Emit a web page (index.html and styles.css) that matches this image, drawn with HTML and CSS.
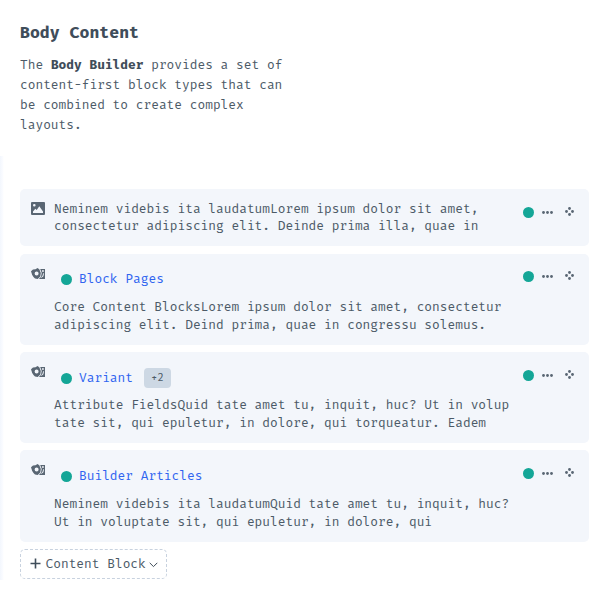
FILE: index.html
```html
<!DOCTYPE html>
<html lang="en">
<head>
<meta charset="utf-8">
<title>Body Content</title>
<link rel="stylesheet" href="styles.css">
</head>
<body>
<svg class="sprite" aria-hidden="true">
  <symbol id="image" viewBox="0 0 14 13">
    <path fill-rule="evenodd" d="M1 0h12Q14 0 14 1v11q0 1-1 1H1Q0 13 0 12V1Q0 0 1 0zM3.3 2a1.3 1.3 0 1 0 0 2.600a1.300 1.300 0 1 0 0-2.600zM2 11h10V9.500L8.300 4.300 5.700 8 4.300 6.700 2 9.500z"/>
  </symbol>
  <symbol id="entry" viewBox="0 0 14 12">
    <path fill-rule="evenodd" d="M0 3.200 2 1.600 4.500 1.300 6.500 0 8.300 1.300 9.800 5 9.300 8.500 6.700 11 4 10.600 2.500 9 1.200 7zM5.600 3.400a2 2 0 1 0 0 4a2 2 0 1 0 0-4z"/>
    <path fill-rule="evenodd" d="M9.200 1H14v10H7.800L9.900 9 10.700 5zM11 2.300v1.500h1.800v-1.500zM12.200 5.200 11.500 7.800l-1.500 1.700 .6.300 1.800-1.600.6-3z"/>
  </symbol>
  <symbol id="dots" viewBox="0 0 11 3">
    <circle cx="1.500" cy="1.500" r="1.400"/><circle cx="5.500" cy="1.500" r="1.400"/><circle cx="9.500" cy="1.500" r="1.400"/>
  </symbol>
  <symbol id="move" viewBox="0 0 9 9">
    <circle cx="4.500" cy="1.500" r="1.400"/><circle cx="1.500" cy="4.500" r="1.400"/><circle cx="7.500" cy="4.500" r="1.400"/><circle cx="4.500" cy="7.500" r="1.400"/>
  </symbol>
</svg>

<main class="field">
  <h1>Body Content</h1>
  <p class="intro">The <b>Body Builder</b> provides a set of<br>content-first block types that can<br>be combined to create complex<br>layouts.</p>

  <div class="blocks">
    <article class="card compact">
      <svg class="type image"><use href="#image"/></svg>
      <p class="preview">Neminem videbis ita laudatumLorem ipsum dolor sit amet,<br>consectetur adipiscing elit. Deinde prima illa, quae in</p>
      <div class="actions"><i class="status"></i><svg class="dots"><use href="#dots"/></svg><svg class="move"><use href="#move"/></svg></div>
    </article>

    <article class="card">
      <svg class="type"><use href="#entry"/></svg>
      <div class="content">
        <div class="entry"><i class="status"></i><a>Block Pages</a></div>
        <p class="preview">Core Content BlocksLorem ipsum dolor sit amet, consectetur<br>adipiscing elit. Deind prima, quae in congressu solemus.</p>
      </div>
      <div class="actions"><i class="status"></i><svg class="dots"><use href="#dots"/></svg><svg class="move"><use href="#move"/></svg></div>
    </article>

    <article class="card">
      <svg class="type"><use href="#entry"/></svg>
      <div class="content">
        <div class="entry"><i class="status"></i><a>Variant</a><span class="badge">+2</span></div>
        <p class="preview">Attribute FieldsQuid tate amet tu, inquit, huc? Ut in volup<br>tate sit, qui epuletur, in dolore, qui torqueatur. Eadem</p>
      </div>
      <div class="actions"><i class="status"></i><svg class="dots"><use href="#dots"/></svg><svg class="move"><use href="#move"/></svg></div>
    </article>

    <article class="card">
      <svg class="type"><use href="#entry"/></svg>
      <div class="content">
        <div class="entry"><i class="status"></i><a>Builder Articles</a></div>
        <p class="preview">Neminem videbis ita laudatumQuid tate amet tu, inquit, huc?<br>Ut in voluptate sit, qui epuletur, in dolore, qui</p>
      </div>
      <div class="actions"><i class="status"></i><svg class="dots"><use href="#dots"/></svg><svg class="move"><use href="#move"/></svg></div>
    </article>
    <button class="add" type="button">
      <svg class="plus" viewBox="0 0 11 11"><path d="M5.500 .5v10M.5 5.500h10"/></svg>
      <span>Content Block</span>
      <svg class="chevron" viewBox="0 0 9 6"><path d="M.7.8 4.500 4.600 8.300.8"/></svg>
    </button>
  </div>
</main>
</body>
</html>
```

FILE: styles.css
```css
* { box-sizing: border-box; }
body {
  margin: 0;
  background: #fff;
  color: #4c5a67;
  font: 12.870px/20px "Fira Mono", "Fira Code", "DejaVu Sans Mono", monospace;
}
svg { display: block; flex: none; fill: #596673; }
.sprite { position: absolute; width: 0; height: 0; }
.field { height: 597px; padding-top: 20px; }
h1 {
  margin: 0 20px;
  color: #3f4d5a;
  font-size: 16.550px;
  line-height: 25px;
}
p { margin: 0; white-space: nowrap; }
.intro { margin: 10px 20px 0; }
.intro b { color: #3f4d5a; }
.blocks {
  height: 424px;
  margin-top: 21px;
  padding: 33px 18px 0 20px;
  background: linear-gradient(to right, #f3f7fd 0, #f8faff 2px, #fff 4px) no-repeat;
}
.card {
  display: flex;
  align-items: flex-start;
  height: 91.300px;
  margin-bottom: 7px;
  padding-left: 11px;
  border-radius: 5px;
  background: #f3f6fb;
}
.card.compact { height: 57px; margin-bottom: 7.700px; }
.type { width: 14px; height: 12px; margin: 14.200px 9px 0 0; }
.type.image { height: 13px; margin-top: 13px; }
.preview { line-height: 18px; }
.compact .preview { margin-top: 11px; line-height: 17px; }
.entry { display: flex; align-items: center; height: 20px; margin: 15.700px 0 8.600px 7px; }
.status { flex: none; width: 11px; height: 11px; border-radius: 50%; background: #14a697; }
.entry .status { margin: 1px 7px 0 0; }
.entry a { color: #2f64f0; }
.badge {
  margin-left: 11px;
  padding: 0 7px;
  border-radius: 4px;
  background: #cdd8e4;
  font-size: 10.700px;
}
.actions { display: flex; align-items: center; margin: 17.700px 15px 0 auto; }
.compact .actions { margin-top: 18px; }
.actions .status { margin-right: 8px; }
.dots { width: 11px; height: 3px; margin-right: 12px; }
.move { width: 9px; height: 9px; margin-top: -2px; }
.add {
  display: flex;
  align-items: center;
  width: 147px;
  height: 30px;
  padding: 0 8px 0 9px;
  border: 1px dashed #c8d2df;
  border-radius: 5px;
  background: #fff;
  color: inherit;
  font: inherit;
}
.add svg { fill: none; stroke: #3f4d5a; }
.plus { width: 11px; height: 11px; margin-right: 4.500px; stroke-width: 1.600; }
.chevron { width: 9px; height: 6px; margin: 2px 0 0 3px; }
```
